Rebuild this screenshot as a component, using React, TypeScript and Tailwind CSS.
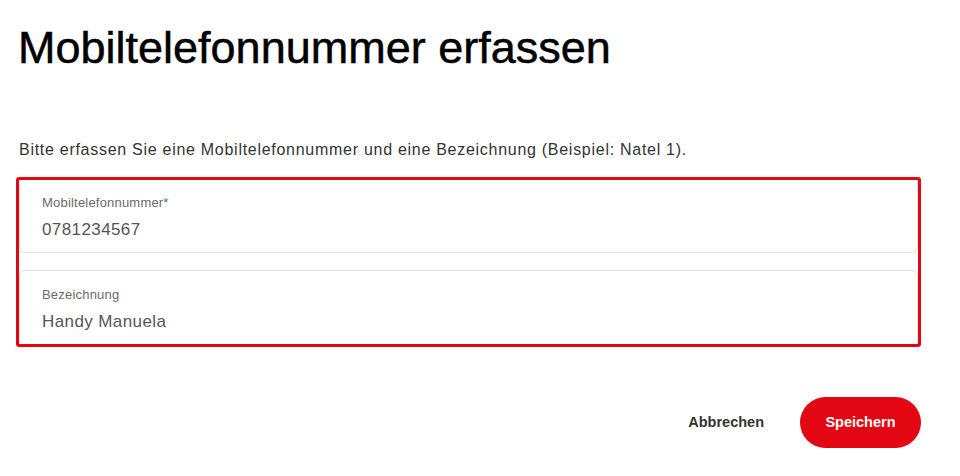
import React from "react";

const Field: React.FC<{ label: string; value: string; className?: string }> = ({ label, value, className }) => (
  <div className={"bg-white border border-[#e2e2e2] rounded-md px-[22px] pb-[11px] " + (className ?? "")}>
    <div className="text-[13px] leading-[16px] tracking-[0.2px] text-[#6b6b6b]">{label}</div>
    <div className="mt-[8px] text-[17px] leading-[22px] text-[#555555] tracking-[0.4px]">{value}</div>
  </div>
);

const App: React.FC = () => {
  return (
    <div className="w-[960px] h-[476px] bg-white px-4 font-['Liberation_Sans',Arial,sans-serif]">
      <h1 className="pt-[22px] pl-[2px] text-[45px] leading-[52px] text-black [-webkit-text-stroke:0.5px_black]">
        Mobiltelefonnummer erfassen
      </h1>

      <p className="mt-[65px] pl-[3px] text-[16px] leading-[22px] tracking-[0.72px] text-[#333333]">
        Bitte erfassen Sie eine Mobiltelefonnummer und eine Bezeichnung (Beispiel: Natel 1).
      </p>

      <div className="mt-[16px] w-[905px] border-[3px] border-[#e30613] rounded-[3px] flex flex-col gap-[17px] overflow-hidden">
        <Field label="Mobiltelefonnummer*" value="0781234567" className="pt-[15px] rounded-t-none border-t-0" />
        <Field label="Bezeichnung" value="Handy Manuela" className="pt-[16px] rounded-b-none border-b-0" />
      </div>

      <div className="mt-[50px] w-[905px] flex justify-end items-center gap-[36px]">
        <button className="text-[14.5px] font-bold text-[#333333]">Abbrechen</button>
        <button className="w-[121px] h-[51px] rounded-full bg-[#e30613] text-white text-[14.5px] font-bold">
          Speichern
        </button>
      </div>
    </div>
  );
};

export default App;
